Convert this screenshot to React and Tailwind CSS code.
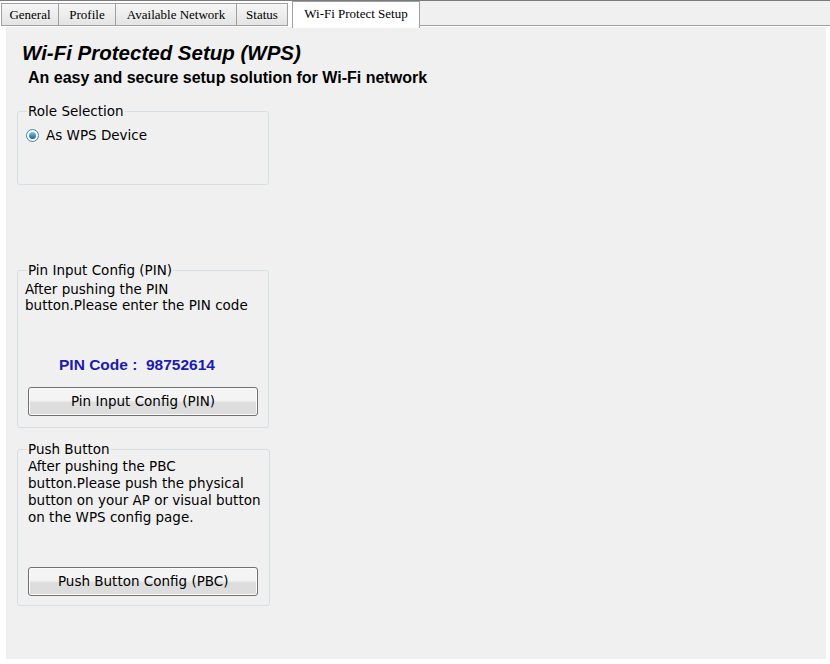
import { useState } from 'react'

const tabs = [
  { label: 'General', w: 'w-[58px]' },
  { label: 'Profile', w: 'w-[57px]' },
  { label: 'Available Network', w: 'w-[121px]' },
  { label: 'Status', w: 'w-[51px]' },
]

function GroupBox({ title, className, children }) {
  return (
    <fieldset
      className={`ml-[11px] w-[252px] rounded-[3px] border border-[#d5dfe5] px-[8px] ${className}`}>
      <legend className="ml-[1px] px-[1px] text-[13.5px] leading-[15px] text-black">
        {title}
      </legend>
      {children}
    </fieldset>
  )
}

function WinButton({ children }) {
  return (
    <button
      type="button"
      className="h-[29px] w-[230px] rounded-[3px] border border-[#707070] bg-gradient-to-b from-[#f4f4f4] from-45% to-[#dddddd] to-55% text-[13.5px] text-black shadow-[inset_0_0_0_1px_#fcfcfc]">
      {children}
    </button>
  )
}

export default function App() {
  const [role, setRole] = useState('device')

  return (
    <div className="h-[664px] w-[830px] bg-white font-['DejaVu_Sans',sans-serif]">
      {/* tab strip */}
      <div className="flex h-[27px] items-start border-t border-[#7a7a7a]">
        <div className="flex h-[25px] pt-[2px]">
          {tabs.map((tab, i) => (
            <div
              key={tab.label}
              className={`flex h-[23px] items-center justify-center border border-[#a0a0a0] bg-gradient-to-b from-[#f6f6f6] to-[#e4e4e4] font-['Liberation_Serif',serif] text-[13px] text-black ${tab.w} ${i === 0 ? 'ml-[1px]' : 'border-l-0'}`}>
              {tab.label}
            </div>
          ))}
        </div>
        <div className="ml-[4px] flex h-[27px] w-[128px] items-start justify-center border border-b-0 border-[#a0a0a0] bg-white pt-[4px] font-['Liberation_Serif',serif] text-[13px] leading-[15px] text-black">
          Wi-Fi Protect Setup
        </div>
        <div className="h-[25px] flex-1 border-b border-[#a0a0a0] bg-[#f0f0f0]"></div>
      </div>

      {/* page */}
      <div className="ml-[6px] h-[632px] w-[820px] bg-[#f0f0f0] pt-[14px]">
        <h1 className="pl-[16px] font-['Liberation_Sans',Arial,sans-serif] text-[20.5px] leading-[24px] font-bold italic text-black">
          Wi-Fi Protected Setup (WPS)
        </h1>
        <p className="mt-[3px] pl-[22px] font-['Liberation_Sans',Arial,sans-serif] text-[16px] leading-[19px] font-bold text-black">
          An easy and secure setup solution for Wi-Fi network
        </p>

        <GroupBox title="Role Selection" className="mt-[17px] h-[81px]">
          <label className="mt-[6px] flex items-center gap-[7px] text-[13.5px] text-black">
            <span className="flex h-[13px] w-[13px] items-center justify-center rounded-full border border-[#3c7fb1] bg-white">
              {role === 'device' && (
                <span className="h-[7px] w-[7px] rounded-full bg-gradient-to-b from-[#7cc7ef] to-[#1e5f8f]"></span>
              )}
            </span>
            <input
              type="radio"
              className="hidden"
              checked={role === 'device'}
              onChange={() => setRole('device')}
            />
            As WPS Device
          </label>
        </GroupBox>

        <GroupBox title="Pin Input Config (PIN)" className="mt-[78px] h-[165px]">
          <p className="mt-[3px] -ml-[1px] text-[13.5px] leading-[16px] text-black">
            After pushing the PIN
            <br />
            button.Please enter the PIN code
          </p>
          <div className="mt-[43px] pl-[33px] font-['Liberation_Sans',Arial,sans-serif] text-[15.5px] leading-[17px] font-bold text-[#1b1bb0]">
            PIN Code :&nbsp; 98752614
          </div>
          <div className="mt-[14px] flex justify-center">
            <WinButton>Pin Input Config (PIN)</WinButton>
          </div>
        </GroupBox>

        <GroupBox title="Push Button" className="mt-[14px] h-[164px]">
          <p className="mt-[1px] ml-[2px] whitespace-nowrap text-[13.5px] leading-[17px] text-black">
            After pushing the PBC
            <br />
            button.Please push the physical
            <br />
            button on your AP or visual button
            <br />
            on the WPS config page.
          </p>
          <div className="mt-[41px] flex justify-center">
            <WinButton>Push Button Config (PBC)</WinButton>
          </div>
        </GroupBox>
      </div>
    </div>
  )
}
